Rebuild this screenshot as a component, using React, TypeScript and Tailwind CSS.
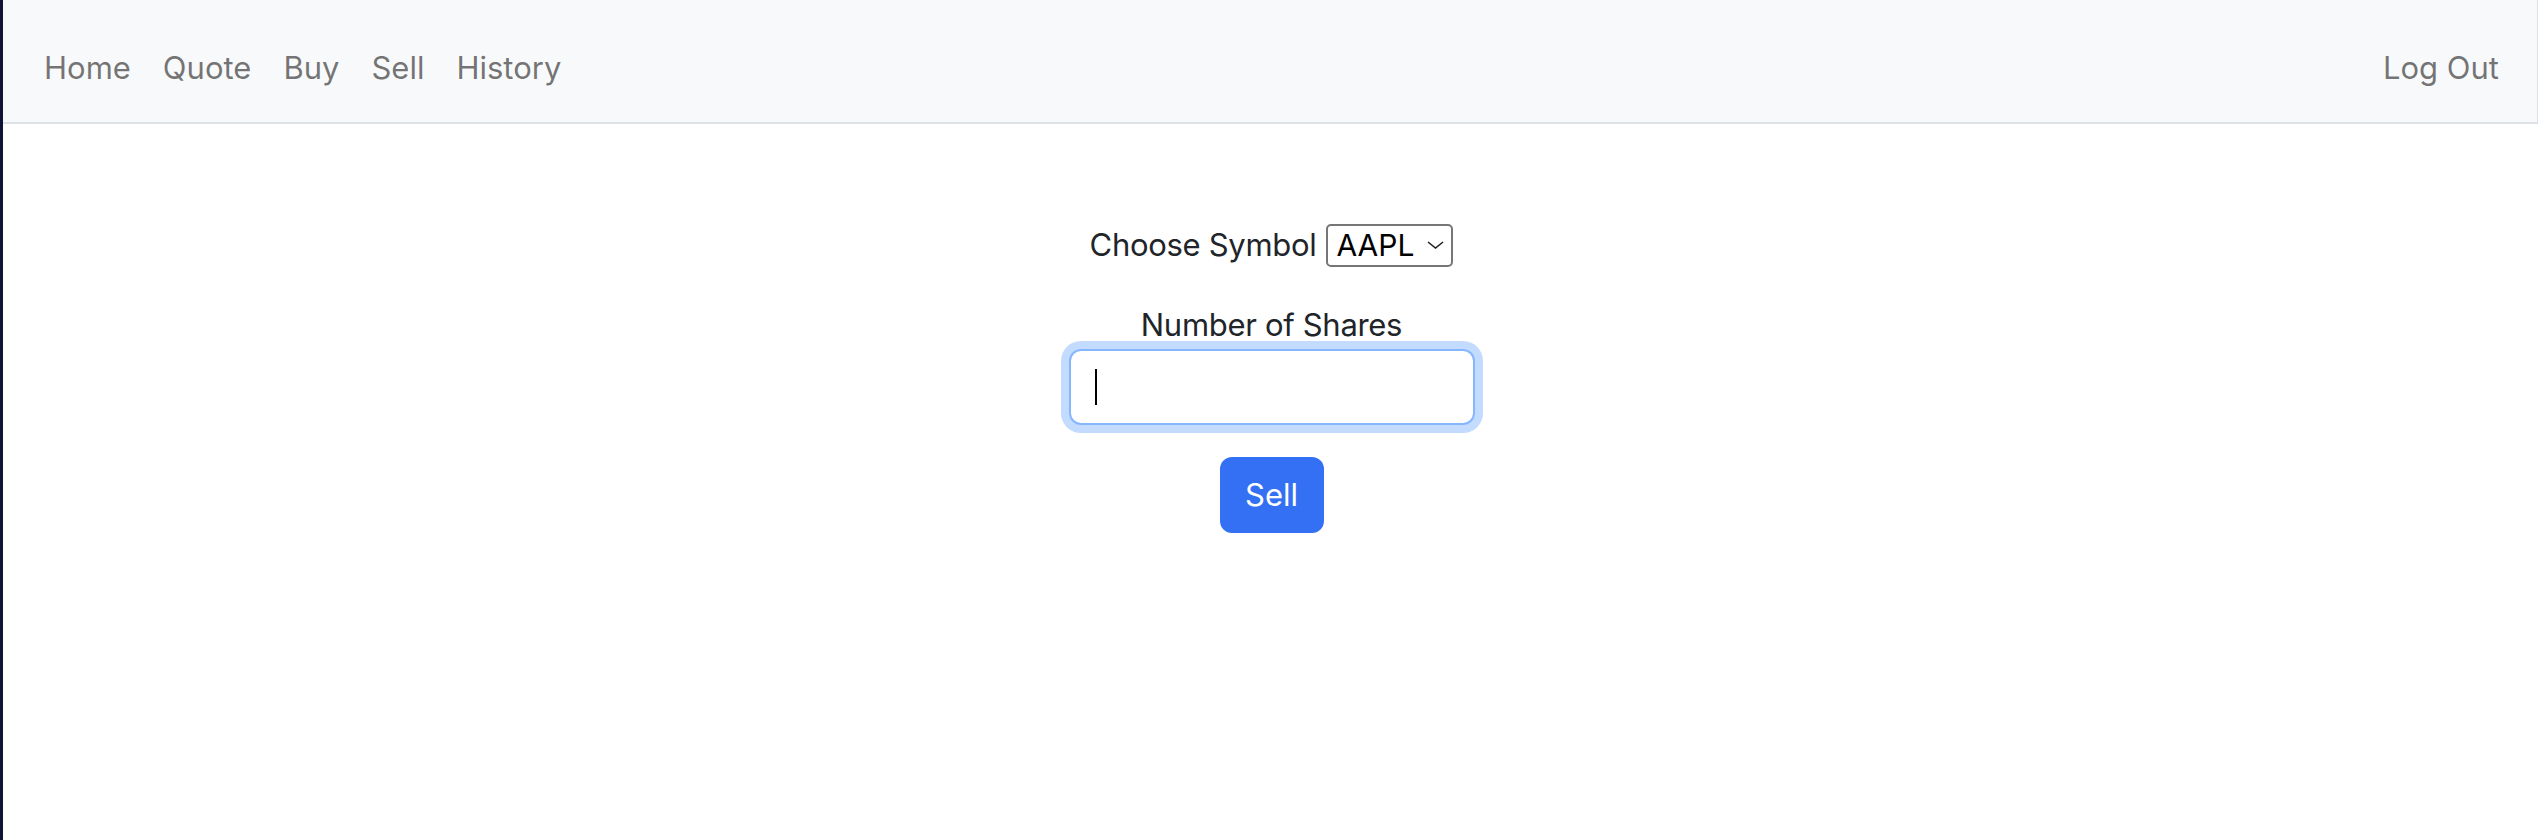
export default function App() {
  return (
    <div className="flex h-[840px] w-full bg-white font-['Inter','Noto_Sans',sans-serif]">
      <div className="w-[3px] shrink-0 bg-[#10123a]" />
      <div className="flex flex-1 flex-col">
        <nav className="flex h-[124px] items-start justify-between border-b-2 border-r border-[#dee2e6] bg-[#f8f9fa] pl-[41px] pr-[38px] pt-[44px] mr-[2px]">
          <div className="flex gap-[32px] text-[31px] leading-[48px] text-[rgba(0,0,0,0.55)]">
            <span>Home</span>
            <span>Quote</span>
            <span>Buy</span>
            <span>Sell</span>
            <span>History</span>
          </div>
          <div className="text-[31px] leading-[48px] text-[rgba(0,0,0,0.55)]">Log Out</div>
        </nav>
        <main className="flex flex-col items-center pt-[97px] text-[#212529]">
          <div className="flex h-[48px] items-center text-[31px] leading-[48px] tracking-[-0.01em]">
            <span>Choose Symbol</span>
            <div className="ml-[10px] flex h-[43px] w-[127px] items-center justify-between rounded-[5px] border-2 border-[#767676] pl-[8px] pr-[7px] text-[30px] tracking-normal text-black">
              <span className="leading-none">AAPL</span>
              <svg width="17" height="8" viewBox="0 0 17 8" fill="none">
                <polyline points="1,1 8.5,7 16,1" stroke="#222" strokeWidth="1.6" />
              </svg>
            </div>
          </div>
          <div className="mt-[32px] text-[31px] leading-[48px] tracking-[-0.01em]">Number of Shares</div>
          <div className="flex h-[76px] w-[406px] items-center rounded-[12px] border-2 border-[#86b7fe] bg-white pl-[24px] shadow-[0_0_0_8px_rgba(13,110,253,0.25)]">
            <span className="block h-[36px] w-[2px] bg-black" />
          </div>
          <button className="mt-[32px] h-[76px] w-[104px] rounded-[12px] bg-[#3470f3] text-[31px] leading-[48px] text-white">
            Sell
          </button>
        </main>
      </div>
    </div>
  );
}
